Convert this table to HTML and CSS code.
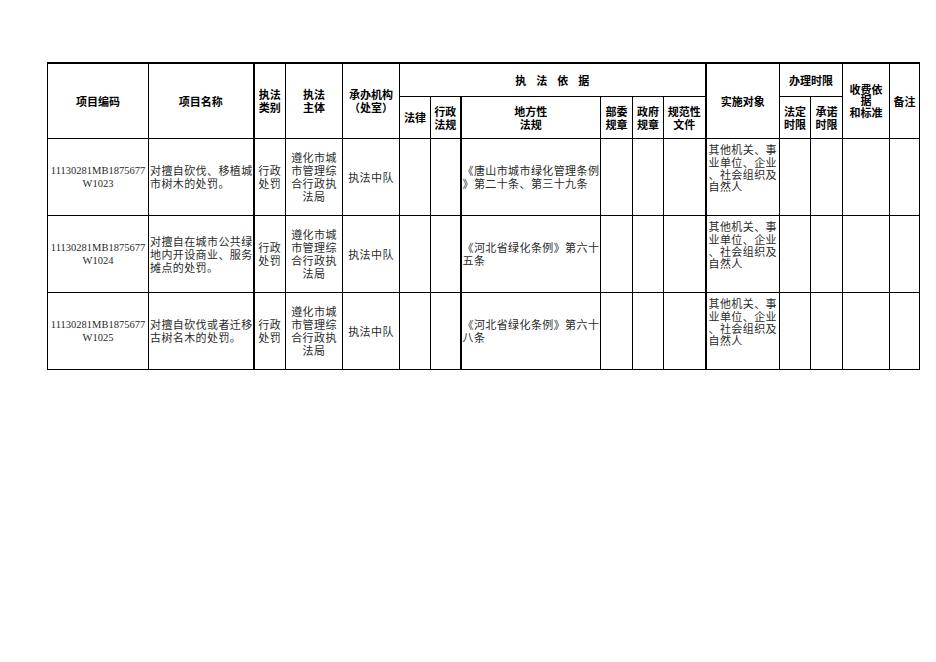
FILE: index.html
```html
<!DOCTYPE html>
<html lang="zh-CN">
<head>
<meta charset="utf-8">
<title>执法依据</title>
<link rel="stylesheet" href="styles.css">
</head>
<body>
<div class="page">
<table class="sheet">
  <colgroup>
    <col class="c1"><col class="c2"><col class="c3"><col class="c4"><col class="c5"><col class="c6"><col class="c7"><col class="c8"><col class="c9"><col class="c10"><col class="c11"><col class="c12"><col class="c13"><col class="c14"><col class="c15"><col class="c16">
  </colgroup>
  <thead>
    <tr class="h1">
      <th rowspan="2">项目编码</th>
      <th rowspan="2">项目名称</th>
      <th rowspan="2" class="tk">执法<br>类别</th>
      <th rowspan="2">执法<br>主体</th>
      <th rowspan="2" class="org">承办机构<br>（处室）</th>
      <th colspan="6"><div class="spread"><span>执</span><span>法</span><span>依</span><span>据</span></div></th>
      <th rowspan="2" class="tk">实施对象</th>
      <th colspan="2">办理时限</th>
      <th rowspan="2" class="fee">收费依<br>据<br>和标准</th>
      <th rowspan="2">备注</th>
    </tr>
    <tr class="h2">
      <th>法律</th>
      <th>行政<br>法规</th>
      <th class="tk">地方性<br>法规</th>
      <th>部委<br>规章</th>
      <th>政府<br>规章</th>
      <th>规范性<br>文件</th>
      <th>法定<br>时限</th>
      <th>承诺<br>时限</th>
    </tr>
  </thead>
  <tbody>
    <tr>
      <td class="code">11130281MB1875677<br>W1023</td>
      <td class="left">对擅自砍伐、移植城<br>市树木的处罚。</td>
      <td class="tk">行政<br>处罚</td>
      <td>遵化市城<br>市管理综<br>合行政执<br>法局</td>
      <td>执法中队</td>
      <td></td>
      <td></td>
      <td class="tk left">《唐山市城市绿化管理条例<br>》第二十条、第三十九条</td>
      <td></td><td></td><td></td>
      <td class="tk left obj">其他机关、事<br>业单位、企业<br>、社会组织及<br>自然人</td>
      <td></td><td></td><td></td><td></td>
    </tr>
    <tr>
      <td class="code">11130281MB1875677<br>W1024</td>
      <td class="left">对擅自在城市公共绿<br>地内开设商业、服务<br>摊点的处罚。</td>
      <td class="tk">行政<br>处罚</td>
      <td>遵化市城<br>市管理综<br>合行政执<br>法局</td>
      <td>执法中队</td>
      <td></td>
      <td></td>
      <td class="tk left">《河北省绿化条例》第六十<br>五条</td>
      <td></td><td></td><td></td>
      <td class="tk left obj">其他机关、事<br>业单位、企业<br>、社会组织及<br>自然人</td>
      <td></td><td></td><td></td><td></td>
    </tr>
    <tr>
      <td class="code">11130281MB1875677<br>W1025</td>
      <td class="left">对擅自砍伐或者迁移<br>古树名木的处罚。</td>
      <td class="tk">行政<br>处罚</td>
      <td>遵化市城<br>市管理综<br>合行政执<br>法局</td>
      <td>执法中队</td>
      <td></td>
      <td></td>
      <td class="tk left">《河北省绿化条例》第六十<br>八条</td>
      <td></td><td></td><td></td>
      <td class="tk left obj">其他机关、事<br>业单位、企业<br>、社会组织及<br>自然人</td>
      <td></td><td></td><td></td><td></td>
    </tr>
  </tbody>
</table>
</div>
</body>
</html>
```

FILE: styles.css
```css
html, body {
  margin: 0;
  padding: 0;
  background: #fff;
}

.page {
  padding: 62px 0 0 47px;
}

.sheet {
  border-collapse: collapse;
  table-layout: fixed;
  width: 872px;
  border-top: 2px solid #000;
  border-left: 1px solid #000;
  border-right: 1px solid #000;
  border-bottom: 1px solid #000;
  font-family: "Noto Sans CJK SC", "Noto Sans", sans-serif;
  color: #000;
}

.c1 { width: 101px; }
.c2 { width: 105px; }
.c3 { width: 32px; }
.c4 { width: 57px; }
.c5 { width: 57px; }
.c6 { width: 31px; }
.c7 { width: 30px; }
.c8 { width: 140px; }
.c9 { width: 32px; }
.c10 { width: 31px; }
.c11 { width: 42px; }
.c12 { width: 74px; }
.c13 { width: 31px; }
.c14 { width: 32px; }
.c15 { width: 47px; }
.c16 { width: 30px; }

.sheet th,
.sheet td {
  border: 1px solid #000;
  padding: 0;
  text-align: center;
  vertical-align: middle;
  overflow: hidden;
  white-space: nowrap;
}

.sheet th {
  font-size: 11px;
  line-height: 13px;
  font-weight: 700;
}

.sheet .tk {
  border-left: 2px solid #000;
}

.h1 th {
  height: 32px;
}

.h2 th {
  height: 41px;
}

.sheet td {
  height: 76px;
  font-size: 11px;
  line-height: 13px;
  letter-spacing: 0.4px;
  color: #2a2a2a;
}

.sheet td.left {
  text-align: left;
  padding-left: 1px;
}

.sheet td.obj {
  height: 58px;
  padding-left: 2px;
  padding-bottom: 18px;
  line-height: 12.3px;
}

.sheet td.code {
  font-family: "Liberation Serif", "Noto Sans CJK SC", serif;
  font-size: 10.5px;
  letter-spacing: 0;
}

.spread {
  display: flex;
  justify-content: center;
  gap: 10px;
}

.org {
  line-height: 13px;
}

.sheet th.fee {
  line-height: 11.5px;
}
```
